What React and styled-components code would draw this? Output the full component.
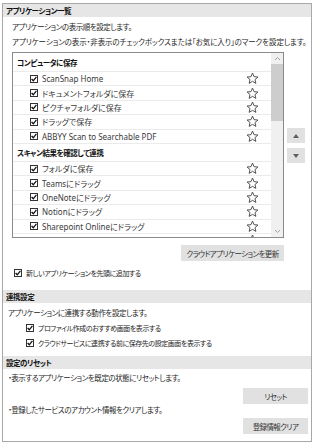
import React from 'react';
import styled, { createGlobalStyle } from 'styled-components';

const Global = createGlobalStyle`
  html, body { margin: 0; padding: 0; background: #fff; }
  body {
    font-family: "Noto Sans", "Noto Sans CJK JP", sans-serif;
    font-size: 7.5px;
    letter-spacing: -0.45px;
    color: #222;
    font-feature-settings: "palt";
  }
  * { box-sizing: border-box; }
`;

const Page = styled.div`
  width: 315px;
  padding: 3px 3px 0 2px;
`;

const Frame = styled.div`
  border: 1px solid #a8a8a8;
  height: 439px;
  display: flex;
  flex-direction: column;
`;

const Band = styled.div`
  height: 13px;
  background: #e6e6e6;
  font-weight: bold;
  padding-left: 3px;
  display: flex;
  align-items: center;
  color: #111;
  margin-top: ${p => p.$mt || 0}px;
`;

const Line = styled.div`
  height: ${p => p.$h || 15}px;
  line-height: ${p => p.$h || 15}px;
  padding-left: ${p => p.$pl || 0}px;
  margin-top: ${p => p.$mt || 0}px;
  letter-spacing: ${p => (p.$ls ?? -0.45)}px;
  white-space: nowrap;
  color: #262626;
`;

const ListArea = styled.div`
  display: flex;
  align-items: flex-start;
  gap: 3px;
  padding-left: 9px;
  margin-top: 2.5px;
`;

const ListColumn = styled.div`
  display: flex;
  flex-direction: column;
  align-items: flex-end;
`;

const ListBox = styled.div`
  width: 272px;
  height: 186px;
  border: 1px solid #8a8a8a;
  display: flex;
  background: #fff;
`;

const Rows = styled.div`
  flex: 1;
  overflow: hidden;
`;

const HeadRow = styled.div`
  height: 18px;
  border-top: ${p => p.$first ? 'none' : '1px solid #ebebeb'};
  display: flex;
  align-items: center;
  padding-left: 4px;
  font-weight: bold;
  color: #111;
`;

const ItemRow = styled.div`
  height: 14.4px;
  border-top: 1px solid #ebebeb;
  display: flex;
  align-items: center;
  padding-left: 17px;
  padding-right: 12px;
  gap: 4px;
  color: #3a3a3a;
  font-size: 8px;
  letter-spacing: 0;
`;

const ItemText = styled.span`
  flex: 1;
  white-space: nowrap;
`;

const ScrollBar = styled.div`
  width: 12px;
  background: #f0f0f0;
  display: flex;
  flex-direction: column;
  align-items: center;
`;

const ScrollArrow = styled.div`
  height: 11px;
  width: 100%;
  display: flex;
  align-items: center;
  justify-content: center;
`;

const Thumb = styled.div`
  width: 100%;
  height: 57px;
  background: #cdcdcd;
`;

const Spacer = styled.div`
  flex: 1;
`;

const SideButtons = styled.div`
  display: flex;
  flex-direction: column;
  gap: 5px;
  margin-top: 76px;
`;

const SideButton = styled.div`
  width: 18px;
  height: 15px;
  background: #e1e1e1;
  display: flex;
  align-items: center;
  justify-content: center;
`;

const Button = styled.div`
  width: ${p => p.$w}px;
  height: 16px;
  background: #e1e1e1;
  color: #333;
  display: flex;
  align-items: center;
  justify-content: center;
  white-space: nowrap;
  letter-spacing: -0.6px;
  margin-top: ${p => p.$mt || 0}px;
  margin-right: ${p => p.$mr || 0}px;
  align-self: flex-end;
`;

const CheckRow = styled.div`
  height: ${p => p.$h || 15}px;
  display: flex;
  align-items: center;
  gap: 4px;
  padding-left: ${p => p.$pl || 0}px;
  margin-top: ${p => p.$mt || 0}px;
  white-space: nowrap;
  font-size: 7px;
  color: #262626;
`;

const Box = styled.span`
  width: 8px;
  height: 8px;
  border: 1px solid #333;
  background: #fff;
  display: inline-flex;
  align-items: center;
  justify-content: center;
  flex: none;
`;

const Check = () => (
  <Box>
    <svg width="6" height="6" viewBox="0 0 6 6">
      <polyline points="0.6,3 2.3,4.8 5.4,0.9" fill="none" stroke="#111" strokeWidth="1.3" />
    </svg>
  </Box>
);

const Star = () => (
  <svg width="13" height="13" viewBox="0 0 24 24" style={{ flex: 'none' }}>
    <polygon
      points="12,2 14.9,8.6 22,9.3 16.6,14 18.2,21 12,17.3 5.8,21 7.4,14 2,9.3 9.1,8.6"
      fill="none"
      stroke="#444"
      strokeWidth="1.7"
      strokeLinejoin="round"
    />
  </svg>
);

const Chevron = ({ up }) => (
  <svg width="7" height="5" viewBox="0 0 7 5">
    <polyline points={up ? '1,4 3.5,1.5 6,4' : '1,1 3.5,3.5 6,1'} fill="none" stroke="#a0a0a0" strokeWidth="1" />
  </svg>
);

const Tri = ({ up }) => (
  <svg width="6" height="4" viewBox="0 0 6 4">
    <polygon points={up ? '0,4 3,0 6,4' : '0,0 6,0 3,4'} fill="#606060" />
  </svg>
);

const groups = [
  {
    title: 'コンピュータに保存',
    items: ['ScanSnap Home', 'ドキュメントフォルダに保存', 'ピクチャフォルダに保存', 'ドラッグで保存', 'ABBYY Scan to Searchable PDF'],
  },
  {
    title: 'スキャン結果を確認して連携',
    items: ['フォルダに保存', 'Teamsにドラッグ', 'OneNoteにドラッグ', 'Notionにドラッグ', 'Sharepoint Onlineにドラッグ', 'Boxにドラッグ'],
  },
];

export default function App() {
  return (
    <>
      <Global />
      <Page>
        <Frame>
          <Band>アプリケーション一覧</Band>
          <Line $pl={9} $mt={2.5}>アプリケーションの表示順を設定します。</Line>
          <Line $pl={9} $ls={-0.1}>アプリケーションの表示・非表示のチェックボックスまたは「お気に入り」のマークを設定します。</Line>
          <ListArea>
            <ListColumn>
              <ListBox>
                <Rows>
                  {groups.map((g, gi) => (
                    <React.Fragment key={g.title}>
                      <HeadRow $first={gi === 0}>{g.title}</HeadRow>
                      {g.items.map(it => (
                        <ItemRow key={it}>
                          <Check />
                          <ItemText>{it}</ItemText>
                          <Star />
                        </ItemRow>
                      ))}
                    </React.Fragment>
                  ))}
                </Rows>
                <ScrollBar>
                  <ScrollArrow><Chevron up /></ScrollArrow>
                  <Thumb />
                  <Spacer />
                  <ScrollArrow><Chevron /></ScrollArrow>
                </ScrollBar>
              </ListBox>
              <Button $w={103} $mt={7}>クラウドアプリケーションを更新</Button>
            </ListColumn>
            <SideButtons>
              <SideButton><Tri up /></SideButton>
              <SideButton><Tri /></SideButton>
            </SideButtons>
          </ListArea>
          <CheckRow $pl={11} $mt={5} $h={14}>
            <Check />
            <span>新しいアプリケーションを先頭に追加する</span>
          </CheckRow>
          <Band $mt={10}>連携設定</Band>
          <Line $pl={5} $mt={2.5}>アプリケーションに連携する動作を設定します。</Line>
          <CheckRow $pl={23}>
            <Check />
            <span>プロファイル作成のおすすめ画面を表示する</span>
          </CheckRow>
          <CheckRow $pl={23}>
            <Check />
            <span>クラウドサービスに連携する前に保存先の設定画面を表示する</span>
          </CheckRow>
          <Band $mt={5.5}>設定のリセット</Band>
          <Line $pl={5} $h={12} $mt={3}>・表示するアプリケーションを既定の状態にリセットします。</Line>
          <Button $w={65} $mt={4} $mr={3}>リセット</Button>
          <Line $pl={5} $h={12}>・登録したサービスのアカウント情報をクリアします。</Line>
          <Button $w={65} $mt={2} $mr={3}>登録情報クリア</Button>
        </Frame>
      </Page>
    </>
  );
}
